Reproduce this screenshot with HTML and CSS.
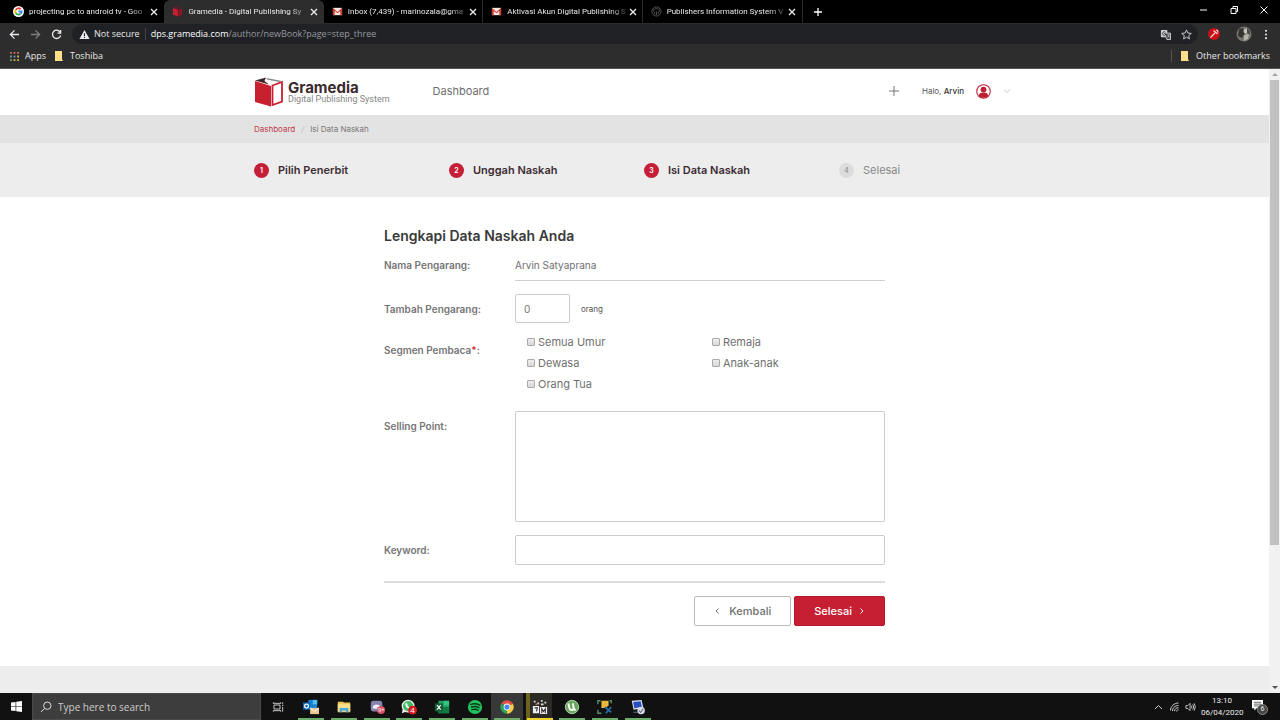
FILE: index.html
```html
<!DOCTYPE html>
<html lang="id">
<head>
<meta charset="utf-8">
<title>Gramedia - Digital Publishing System</title>
<link rel="stylesheet" href="styles.css">
</head>
<body>
<div class="screen">
  <header class="browser">
    <div class="tabstrip">
      <div class="tabs">
        <div class="tab">
          <svg class="fav" viewBox="0 0 24 24"><circle cx="12" cy="12" r="12" fill="#fff"/><g fill="none" stroke-width="4"><path d="M17 7A7 7 0 0 0 6 8.500" stroke="#ea4335"/><path d="M6 8.500A7 7 0 0 0 6 15.500" stroke="#fbbc05"/><path d="M6 15.500A7 7 0 0 0 16.500 17" stroke="#34a853"/><path d="M16.500 17A7 7 0 0 0 19 12H12" stroke="#4285f4"/></g></svg>
          <span class="tab-title">projecting pc to android tv - Goo</span>
          <button class="close" aria-label="Tutup tab"><svg viewBox="0 0 8 8"><path d="M1 1l6 6M7 1L1 7"/></svg></button>
        </div>
        <div class="tab active">
          <svg class="fav" viewBox="0 0 24 24"><path d="M2 4l11 4v15L2 19z" fill="#c41f32"/><path d="M14 8l8-3v14l-8 4z" fill="#8e1524"/><path d="M3 3l8-2 10 3-8 3z" fill="#5a2028"/></svg>
          <span class="tab-title">Gramedia - Digital Publishing Sy</span>
          <button class="close" aria-label="Tutup tab"><svg viewBox="0 0 8 8"><path d="M1 1l6 6M7 1L1 7"/></svg></button>
        </div>
        <div class="tab">
          <svg class="fav" viewBox="0 0 24 24"><path d="M2 4h20v16H2z" fill="#f5e9e8"/><path d="M2 20V4l10 9 10-9v16h-4V11l-6 5-6-5v9z" fill="#d93c35"/></svg>
          <span class="tab-title">Inbox (7,439) - marinozala@gma</span>
          <button class="close" aria-label="Tutup tab"><svg viewBox="0 0 8 8"><path d="M1 1l6 6M7 1L1 7"/></svg></button>
        </div>
        <div class="tab ruled">
          <svg class="fav" viewBox="0 0 24 24"><path d="M2 4h20v16H2z" fill="#f5e9e8"/><path d="M2 20V4l10 9 10-9v16h-4V11l-6 5-6-5v9z" fill="#d93c35"/></svg>
          <span class="tab-title">Aktivasi Akun Digital Publishing S</span>
          <button class="close" aria-label="Tutup tab"><svg viewBox="0 0 8 8"><path d="M1 1l6 6M7 1L1 7"/></svg></button>
        </div>
        <div class="tab ruled">
          <svg class="fav" viewBox="0 0 24 24" fill="none" stroke="#55575a" stroke-width="2"><circle cx="12" cy="12" r="10"/><path d="M12 20v-8M8 18v-4c-5-5-1-9 4-8 5-1 9 3 4 8v4"/></svg>
          <span class="tab-title">Publishers Information System V</span>
          <button class="close" aria-label="Tutup tab"><svg viewBox="0 0 8 8"><path d="M1 1l6 6M7 1L1 7"/></svg></button>
        </div>
      </div>
      <button class="newtab" aria-label="Tab baru"><svg viewBox="0 0 10 10"><path d="M5 1v8M1 5h8"/></svg></button>
      <div class="window-controls">
        <button aria-label="Minimalkan"><svg viewBox="0 0 10 10"><path d="M1 5h7"/></svg></button>
        <button aria-label="Pulihkan"><svg viewBox="0 0 10 10"><path d="M2 3.500h5v5H2zM4 3V1.500h4.500v5H7"/></svg></button>
        <button aria-label="Tutup"><svg viewBox="0 0 10 10"><path d="M1.500 1.500l7 7M8.500 1.500l-7 7"/></svg></button>
      </div>
    </div>
    <div class="toolbar">
      <button aria-label="Kembali"><svg viewBox="0 0 12 12"><path d="M11 6H1.500M6 1.500L1.500 6 6 10.500"/></svg></button>
      <button class="dim" aria-label="Maju"><svg viewBox="0 0 12 12"><path d="M1 6h9.500M6 1.500L10.500 6 6 10.500"/></svg></button>
      <button aria-label="Muat ulang"><svg viewBox="0 0 12 12"><path d="M10 3.500A4.500 4.500 0 1 0 10.500 7M10.500 1v3.500H7"/></svg></button>
      <div class="omnibox">
        <svg class="warn" viewBox="0 0 12 12"><path d="M6 1l5.500 10H.5z" fill="#e8eaed"/><path d="M6 4.500v3M6 8.500v1.300" stroke="#202124" stroke-width="1.200"/></svg>
        <span class="secure">Not secure</span>
        <span class="url"><b>dps.gramedia.com</b>/author/newBook?page=step_three</span>
        <svg class="omni-icon" viewBox="0 0 12 12"><rect x="1" y="1" width="7" height="8" rx="1" fill="#d0d2d4"/><path d="M6.500 4.500h5v7h-4l-1-2.500" fill="#44474b" stroke="#d0d2d4"/><path d="M6 3.500A2 2 0 1 0 6 6.500V5H4.500" fill="none" stroke="#333"/><path d="M8 6.500h3M9.500 6v1c0 1-1 2-1.500 2.500M8.500 7.500l2 2" stroke="#d0d2d4" fill="none" stroke-width=".7"/></svg>
        <svg class="omni-icon" viewBox="0 0 12 12"><path d="M6 1l1.500 3.400 3.700.4-2.800 2.400.8 3.600L6 8.900l-3.200 1.900.8-3.600L.8 4.800l3.700-.4z" fill="none" stroke="#d5d7da"/></svg>
      </div>
      <div class="extensions">
        <svg class="ext" viewBox="0 0 12 12"><circle cx="6" cy="6" r="6" fill="#c71018"/><path d="M2.500 9.500L7 5M5.500 2.500l4 3.500M8 2l1.500.5.500 2" stroke="#ffd6d6" stroke-width="1.200" fill="none"/></svg>
        <svg class="avatar" viewBox="0 0 16 16"><circle cx="8" cy="8" r="7.500" fill="#77756f"/><path d="M3 3l4-1 2 5-3 5-4-2z" fill="#35342f"/><circle cx="10" cy="5" r="2.500" fill="#c4c2ba"/><path d="M8 9l5-1-1 5-4 2z" fill="#b5b2a8"/><path d="M11 2l3 3v4l-3-2z" fill="#4b4a43"/></svg>
        <svg class="dots" viewBox="0 0 4 12" fill="#dadcdf"><circle cx="2" cy="2" r="1.200"/><circle cx="2" cy="6" r="1.200"/><circle cx="2" cy="10" r="1.200"/></svg>
      </div>
    </div>
    <nav class="bookmarks" aria-label="Bookmark">
      <a href="#"><svg viewBox="0 0 10 10"><g fill="#d76b5b"><path d="M0 0h2v2H0zM4 0h2v2H4zM8 0h2v2H8z"/></g><g fill="#6eaa77"><path d="M0 4h2v2H0z"/></g><g fill="#6d94d6"><path d="M4 4h2v2H4z"/></g><g fill="#d9b44c"><path d="M8 4h2v2H8zM4 8h2v2H4zM8 8h2v2H8z"/></g><path d="M0 8h2v2H0z" fill="#6eaa77"/></svg>Apps</a>
      <a class="folder" href="#"><svg viewBox="0 0 10 10"><path d="M1 0h7v8l1 2H1z" fill="#fbe08c"/></svg>Toshiba</a>
      <a class="folder other" href="#"><svg viewBox="0 0 10 10"><path d="M1 0h7v8l1 2H1z" fill="#fbe08c"/></svg>Other bookmarks</a>
    </nav>
  </header>

  <div class="viewport">
    <div class="page">
      <header class="site-header">
        <div class="container header-row">
          <a class="brand" href="#">
            <svg viewBox="0 0 30 30"><path d="M1 4l16 5v20.500L1 25z" fill="#c8202f"/><path d="M1 3.500L12 .5l-1.500 3.500L15 7.500z" fill="#40282c"/><path d="M12.500 1L28 4l-3 1-12-2.500z" fill="#7f8a82"/><path d="M18.500 8.500L28 5v19.500l-9.500 3.500z" fill="#fff" stroke="#c8202f" stroke-width="1.800"/></svg>
            <span class="brand-text"><strong>Gramedia</strong><span>Digital Publishing System</span></span>
          </a>
          <a class="nav-link" href="#">Dashboard</a>
          <button class="add" aria-label="Tambah"><svg viewBox="0 0 12 12"><path d="M6 1v10M1 6h10"/></svg></button>
          <button class="account">
            <span>Halo, <b>Arvin</b></span>
            <svg class="user" viewBox="0 0 14 14"><circle cx="7" cy="7" r="6.300" fill="#fff" stroke="#bd2033"/><circle cx="7" cy="5.200" r="2.700" fill="#bd2033"/><path d="M2.500 11c.5-2.500 2.500-3 4.500-3s4 .5 4.500 3c-2.500 2.500-6.500 2.500-9 0z" fill="#bd2033"/></svg>
            <svg class="chev" viewBox="0 0 8 6"><path d="M1 1.500l3 3 3-3"/></svg>
          </button>
        </div>
      </header>
      <nav class="crumbs" aria-label="Breadcrumb">
        <div class="container crumb-row"><a href="#">Dashboard</a><i>/</i><span>Isi Data Naskah</span></div>
      </nav>
      <section class="steps">
        <ol class="container step-row">
          <li><span class="num">1</span>Pilih Penerbit</li>
          <li><span class="num">2</span>Unggah Naskah</li>
          <li><span class="num">3</span>Isi Data Naskah</li>
          <li class="pending"><span class="num">4</span>Selesai</li>
        </ol>
      </section>
      <main>
        <form class="form">
          <h1>Lengkapi Data Naskah Anda</h1>
          <div class="row name-row"><span class="label">Nama Pengarang:</span><div class="static">Arvin Satyaprana</div></div>
          <div class="row"><label class="label" for="extra">Tambah Pengarang:</label><div class="count"><input id="extra" type="text" inputmode="numeric" value="0"><span>orang</span></div></div>
          <div class="row segment" role="group" aria-labelledby="seg">
            <span class="label" id="seg">Segmen Pembaca<em>*</em>:</span>
            <div class="checks">
              <label><input type="checkbox">Semua Umur</label><label><input type="checkbox">Remaja</label>
              <label><input type="checkbox">Dewasa</label><label><input type="checkbox">Anak-anak</label>
              <label><input type="checkbox">Orang Tua</label>
            </div>
          </div>
          <div class="row selling"><label class="label" for="selling">Selling Point:</label><textarea id="selling"></textarea></div>
          <div class="row"><label class="label" for="keyword">Keyword:</label><input id="keyword" type="text"></div>
          <div class="actions">
            <button type="button" class="btn"><svg viewBox="0 0 6 8"><path d="M4.500 1.500L2 4l2.500 2.500"/></svg>Kembali</button>
            <button type="submit" class="btn primary">Selesai<svg viewBox="0 0 6 8"><path d="M1.500 1.500L4 4 1.500 6.500"/></svg></button>
          </div>
        </form>
      </main>
      <footer class="site-footer"></footer>
    </div>
    <div class="scrollbar">
      <svg viewBox="0 0 10 10"><path d="M2 6.500L5 3.500l3 3z" fill="#a3a3a3"/></svg>
      <div class="thumb"></div>
      <svg viewBox="0 0 10 10"><path d="M2 3.500L5 6.500l3-3z" fill="#505050"/></svg>
    </div>
  </div>

  <footer class="taskbar">
    <button class="start" aria-label="Start"><svg viewBox="0 0 12 12" fill="#fff"><path d="M0 1.700l5-.7v4.600H0zM5.700.9L12 0v5.600H5.700zM0 6.300h5V11l-5-.7zM5.700 6.300H12V12l-6.300-.9z"/></svg></button>
    <div class="search">
      <svg viewBox="0 0 12 12"><circle cx="7.300" cy="4.700" r="3.700"/><path d="M4.600 7.400L1 11"/></svg>
      <input type="text" aria-label="Search" placeholder="Type here to search">
    </div>
    <div class="apps">
      <button class="taskview" aria-label="Task View"><svg viewBox="0 0 18 18" fill="none" stroke="#ddd" stroke-width="1.300"><path d="M3 6h9v6H3zM2 4V2M13 4V2M2 14v2M13 14v2M2 3.500h11M2 14.500h11M16 2v3M16 9v7M15 7h2"/></svg></button>
      <button class="open" aria-label="Outlook"><svg viewBox="0 0 18 18"><path d="M6 1h10v11H6z" fill="#1682d4"/><path d="M11 1h5v5h-5z" fill="#51bdf0"/><path d="M0 4h8v8H0z" fill="#0b66bd"/><circle cx="4" cy="8" r="2.200" fill="none" stroke="#fff" stroke-width="1.300"/><path d="M8 10h10v7H8z" fill="#eac792"/><path d="M8 10l5 4 5-4" fill="none" stroke="#fff"/></svg></button>
      <button class="open" aria-label="File Explorer"><svg viewBox="0 0 18 18"><path d="M2 3h6l1 1h7v11H2z" fill="#f1c657"/><path d="M2 6h14v8H2z" fill="#ffe08b"/><path d="M4 10h10v5h-3v-2H7v2H4z" fill="#4ca8da"/></svg></button>
      <button class="open" aria-label="Discord"><svg viewBox="0 0 18 18"><rect x="2" y="2" width="13" height="12" rx="3" fill="#8583ae"/><path d="M4 10c0-5 9-5 9 0l-2 1H6z" fill="#eee"/><circle cx="13.500" cy="12.500" r="4.500" fill="#d75368"/><text x="10" y="15" font-size="6.500" fill="#fff">9+</text></svg></button>
      <button class="open" aria-label="WhatsApp"><svg viewBox="0 0 18 18"><circle cx="8" cy="8" r="6.500" fill="#3fbd63" stroke="#eee" stroke-width="1.500"/><path d="M1 16l1-5 4 3z" fill="#eee"/><path d="M5 5l1-1 1.500 2L7 7l3 3 1-.5 1 1.500c-3 2-8-3-7-6z" fill="#fff"/><circle cx="13" cy="12.500" r="5" fill="#d71920"/><text x="10.500" y="16" font-size="9" fill="#fff">4</text></svg></button>
      <button class="open" aria-label="Excel"><svg viewBox="0 0 18 18"><path d="M5 2h12v14H5z" fill="#21a366"/><path d="M11 2h6v5h-6z" fill="#33c481"/><path d="M5 9h12v7H5z" fill="#107c41"/><path d="M1 5h9v9H1z" fill="#185c37"/><path d="M3.500 7l4 5M7.500 7l-4 5" stroke="#fff" stroke-width="1.300"/></svg></button>
      <button class="open" aria-label="Spotify"><svg viewBox="0 0 18 18"><circle cx="9" cy="9" r="8" fill="#1fc45d"/><path d="M4 6q5.500-1.500 10.500 1M5 9q5-1.500 8.500.8M5.500 12q4-1 7 .6" fill="none" stroke="#10361d" stroke-width="1.600" stroke-linecap="round"/></svg></button>
      <button class="open current" aria-label="Chrome"><svg viewBox="0 0 18 18"><path d="M9 9L2.500 5.200A7.500 7.500 0 0 1 15.500 5.200z" fill="#dd5144"/><path d="M9 9V16.500A7.500 7.500 0 0 1 2.500 5.200z" fill="#2ba35b"/><path d="M9 9l6.500-3.800A7.500 7.500 0 0 1 9 16.500z" fill="#f7cd45"/><path d="M9 5.200h6.500" stroke="#dd5144" stroke-width="1.500"/><circle cx="9" cy="9" r="3.800" fill="#fff"/><circle cx="9" cy="9" r="2.900" fill="#4688e8"/></svg></button>
      <button class="open alert" aria-label="Movie"><svg viewBox="0 0 18 18"><path d="M1 8h7v8H1zM9 9h8v8H9z" fill="#eee"/><path d="M3 10h3l-1 4M11 16v-5l2 3 2-3v5" fill="none" stroke="#352b37" stroke-width="1.200"/><path d="M2 2h2v2H2zM6 4h2v2H6zM10 1h2v2h-2zM10 5h3v2h-3zM14 3h2v2h-2z" fill="#ddd"/><path d="M4 5h2v2H4z" fill="#cc654e"/></svg></button>
      <button class="open" aria-label="uTorrent"><svg viewBox="0 0 18 18"><circle cx="9" cy="9" r="7.500" fill="#67a95b" stroke="#bbd9b2"/><path d="M5 5l1 5c.5 3 4 3 5 1l-1-6M11 11l2 2" fill="none" stroke="#fff" stroke-width="2.200"/></svg></button>
      <button class="open" aria-label="Connect"><svg viewBox="0 0 18 18"><path d="M5 2h8v5l-3 3H5z" fill="#e9b93a"/><path d="M1 6V2h3M1 12v4h4M16 5V2h-2" fill="none" stroke="#579266" stroke-width="1.500"/><path d="M9 9l7 6M16 9l-6 7" stroke="#246da5" stroke-width="2"/></svg></button>
      <button class="open" aria-label="Remote"><svg viewBox="0 0 18 18"><path d="M2 2l11-1 2 9-11 2z" fill="#dbe5f4"/><path d="M3.500 3.500l8.500-1 1.300 6.500-8.500 1.500z" fill="#284fc0"/><circle cx="12.500" cy="13" r="4.200" fill="#d6dce5"/><path d="M10 13l2 2 3-4M4 15h5" fill="none" stroke="#657186" stroke-width="1.200"/></svg></button>
    </div>
    <div class="tray">
      <svg viewBox="0 0 10 10"><path d="M1.500 7L5 3.500 8.500 7"/></svg>
      <svg viewBox="0 0 10 10"><path d="M1 8.500C1 4.500 4.500 1 9 1M3 9c0-3 2.500-5.500 6-5.500M5 9.200c0-2 1.700-3.500 4-3.500M7 9.500C7 8.500 8 7.700 9 7.700"/></svg>
      <svg viewBox="0 0 12 10"><path d="M1 3.500h2L5.500 1v8L3 6.500H1zM7 3.500q1 1.500 0 3M8.500 2q2 3 0 6M10 1q2.500 4 0 8"/></svg>
      <div class="clock"><span>13:10</span><span>06/04/2020</span></div>
      <div class="notice"><svg viewBox="0 0 12 12"><path d="M0 0h12v9H5l-2.500 2.500V9H0z" fill="#fff"/><path d="M2 2.500h8M2 4.500h8M2 6.500h5" stroke="#333" stroke-width=".8"/></svg><span>6</span></div>
    </div>
  </footer>
</div>
</body>
</html>
```
FILE: styles.css
```css
* { box-sizing: border-box; }
body { margin: 0; }
button { border: 0; padding: 0; background: none; color: inherit; font: inherit; }
button, a, .tab { display: flex; align-items: center; }
a { color: inherit; text-decoration: none; }
svg { display: block; flex: none; }
.screen { min-height: 100vh; display: flex; flex-direction: column; font-family: Inter, sans-serif; }

.browser { background: #2d2d2d; color: #e8e8e8; font: 9px/12px "Open Sans", sans-serif; border-bottom: 1px solid #555; }
.tabstrip { height: 23px; background: #000; display: flex; padding-left: 5px; }
.tabs { display: flex; flex: 0 1 797px; min-width: 0; }
.tab { flex: 1 1 0; min-width: 0; padding: 0 6px 0 8px; }
.tab.active { background: #2d2d2d; border-radius: 6px 6px 0 0; }
.tab.ruled { box-shadow: -1px 0 0 #2b2b2b; }
.fav { width: 11px; height: 11px; margin-right: 5px; }
.tab-title { flex: 1; min-width: 0; font: 8px/12px Roboto, sans-serif; white-space: nowrap; mask-image: linear-gradient(90deg, #000 85%, rgba(0, 0, 0, .2)); }
.close { margin-left: 2px; }
.close svg { width: 8px; height: 8px; stroke: #eee; stroke-width: 1.3; }
.newtab { width: 30px; justify-content: center; border-left: 1px solid #2b2b2b; }
.newtab svg { width: 10px; height: 10px; stroke: #fff; stroke-width: 1.3; }
.window-controls { margin-left: auto; display: flex; gap: 20px; padding: 0 11px 4px 0; }
.window-controls svg { width: 10px; height: 10px; fill: none; stroke: #fff; }
.toolbar { height: 22px; display: flex; align-items: center; padding: 0 12px 0 9px; gap: 10px; }
.toolbar button svg { width: 11px; height: 11px; fill: none; stroke: #e8eaed; stroke-width: 1.4; }
.toolbar button.dim svg { stroke: #808080; }
.omnibox { flex: 1; height: 20px; border-radius: 10px; background: #202124; display: flex; align-items: center; padding: 0 6px 0 7px; }
.warn { width: 11px; height: 11px; margin-right: 4px; }
.secure { padding-right: 5px; border-right: 1px solid #444; }
.url { margin-left: 5px; margin-right: auto; color: #969a9f; }
.url b { font-weight: 400; color: #fff; }
.omni-icon { width: 11px; height: 11px; margin-left: 10px; }
.extensions { display: flex; align-items: center; }
.ext { width: 12px; height: 12px; margin-right: 16px; }
.avatar { width: 16px; height: 16px; margin-right: 12px; }
.dots { width: 4px; height: 11px; }
.bookmarks { height: 23px; display: flex; align-items: center; gap: 8px; padding: 0 10px 1px; }
.bookmarks svg { width: 9px; height: 9px; margin-right: 6px; }
.bookmarks .folder svg { width: 10px; height: 10px; }
.bookmarks .other { margin-left: auto; border-left: 1px solid #555; padding-left: 8px; }

.viewport { flex: 1; display: flex; }
.page { flex: 1; min-width: 0; display: flex; flex-direction: column; background: #fff; }
.container { width: 100%; max-width: 761px; margin: 0 auto; }
.header-row { height: 46px; padding-bottom: 2px; display: flex; align-items: center; }
.brand { padding-top: 2px; }
.brand svg { width: 30px; height: 30px; margin-right: 4px; }
.brand-text { display: flex; flex-direction: column; padding-top: 2px; color: #858585; font: 9px/11px Roboto, sans-serif; }
.brand-text strong { color: #3b2a2e; font: 700 15px/13px Inter, sans-serif; }
.nav-link { margin-left: 43px; color: #6e6e6e; font-size: 11px; }
.add { margin-left: auto; }
.add svg { width: 12px; height: 12px; stroke: #777; stroke-width: 1; }
.account { margin-left: 22px; font-size: 8px; color: #555; padding-right: 4px; }
.account b { color: #333; font-weight: 500; }
.user { width: 15px; height: 15px; margin: 0 12px; }
.chev { width: 8px; height: 6px; fill: none; stroke: #c5c5c5; }
.crumbs { background: #e3e3e3; color: #777; font-size: 8px; line-height: 28px; }
.crumb-row { display: flex; gap: 6px; }
.crumbs a { color: #c13b49; }
.crumbs i { color: #bbb; }
.steps { background: #ededed; }
.step-row { list-style: none; padding: 0; display: flex; height: 54px; align-items: center; }
.step-row li { flex: 0 0 195px; display: flex; align-items: center; gap: 9px; font-size: 11px; font-weight: 600; color: #3b2c32; }
.step-row li:last-child { flex: 1; }
.num { width: 15px; height: 15px; border-radius: 50%; background: #c41f37; color: #fff; font-size: 7px; line-height: 15px; text-align: center; }
.step-row .pending { color: #888; font-weight: 400; }
.pending .num { background: #dcdcdc; color: #888; }

main { flex: 1; padding: 30px 16px 40px; }
.form { max-width: 501px; margin: 0 auto; color: #707070; font-size: 11px; }
h1 { margin: 0 0 10px; font-size: 14px; line-height: 18px; font-weight: 600; color: #3a3a3a; }
.row { display: grid; grid-template-columns: 131px 1fr; align-items: center; margin-bottom: 13px; }
.label { font-size: 10px; font-weight: 600; color: #757575; }
.label em { color: #d33; font-style: normal; }
.name-row { align-items: start; line-height: 20px; }
.static { height: 26px; border-bottom: 1px solid #d0d0d0; font-size: 10px; }
input[type="text"], textarea { width: 100%; height: 30px; border: 1px solid #ccc; border-radius: 2px; background: #fff; padding: 0 8px; color: #777; font: 10px Inter, sans-serif; display: block; }
.count { display: flex; align-items: center; gap: 11px; font-size: 8px; color: #555; }
.count input[type="text"] { width: 55px; height: 29px; }
.segment { align-items: start; margin: -5px 0 17px; }
.segment .label { line-height: 38px; }
.checks { display: grid; grid-template-columns: 185px 1fr; padding-left: 12px; }
.checks label { display: flex; align-items: center; gap: 3px; height: 21px; }
.checks input { appearance: none; margin: 0; width: 8px; height: 8px; border: 1px solid #aaa; border-radius: 1px; background: linear-gradient(#eee, #d8d8d8); }
.selling { align-items: start; }
.selling .label { line-height: 30px; }
textarea { height: 111px; resize: none; }
.actions { border-top: 2px solid #ddd; margin-top: 16px; padding-top: 13px; display: flex; justify-content: flex-end; gap: 3px; }
.btn { height: 30px; padding: 0 19px; gap: 9px; border: 1px solid #bbb; border-radius: 2px; font-size: 11px; font-weight: 500; }
.btn svg { width: 6px; height: 8px; fill: none; stroke: currentColor; }
.primary { background: #c61e33; border-color: #b5182d; color: #fff; gap: 7px; }
.site-footer { height: 27px; background: #ededed; }
.scrollbar { width: 11px; background: #f1f1f1; display: flex; flex-direction: column; align-items: center; }
.scrollbar svg { width: 10px; height: 11px; }
.scrollbar svg:last-child { margin-top: auto; }
.thumb { width: 9px; height: 74.5%; background: #c1c1c1; }

.taskbar { height: 27px; background: #111; color: #eee; display: flex; font: 9px/12px "Open Sans", sans-serif; }
.start { width: 32px; justify-content: center; }
.start svg { width: 11px; height: 11px; }
.search { width: 229px; background: #3d3d3d; border: 1px solid #4a4a4a; display: flex; align-items: center; padding-left: 7px; gap: 6px; }
.search svg { width: 12px; height: 12px; fill: none; stroke: #ddd; }
.search input[type="text"] { flex: 1; min-width: 0; height: 24px; padding: 0; border: 0; background: none; color: #eee; font: 10px "Open Sans", sans-serif; }
.search input::placeholder { color: #ccc; }
.apps { display: flex; flex: 0 1 393px; }
.apps button { flex: 1 1 0; justify-content: center; }
.apps svg { width: 16px; height: 16px; }
.apps .taskview { flex: 0 0 34px; }
.apps .taskview svg { width: 12px; height: 12px; }
.apps .open { background: linear-gradient(#6bae69, #6bae69) center bottom / 26px 2px no-repeat; }
.apps .current { background-color: #383838; }
.apps .alert { background: linear-gradient(#f1d52c, #f1d52c) center bottom / 26px 2px no-repeat, linear-gradient(90deg, #111 3px, #6c641d 3px, #6c641d 7px, #2c2a26 7px, #2c2a26 29px, #111 29px); }
.tray { margin-left: auto; padding-right: 12px; display: flex; align-items: center; gap: 5px; font: 8px/12px Roboto, sans-serif; }
.tray svg { width: 11px; height: 10px; fill: none; stroke: #ccc; }
.clock { width: 42px; text-align: center; display: flex; flex-direction: column; }
.notice { margin-left: 4px; position: relative; width: 16px; height: 14px; }
.notice svg { width: 11px; height: 11px; stroke: none; }
.notice span { position: absolute; right: 0; top: 4px; width: 11px; height: 11px; border-radius: 50%; background: #444; border: 1px solid #888; font-size: 7px; line-height: 9px; text-align: center; }
```
